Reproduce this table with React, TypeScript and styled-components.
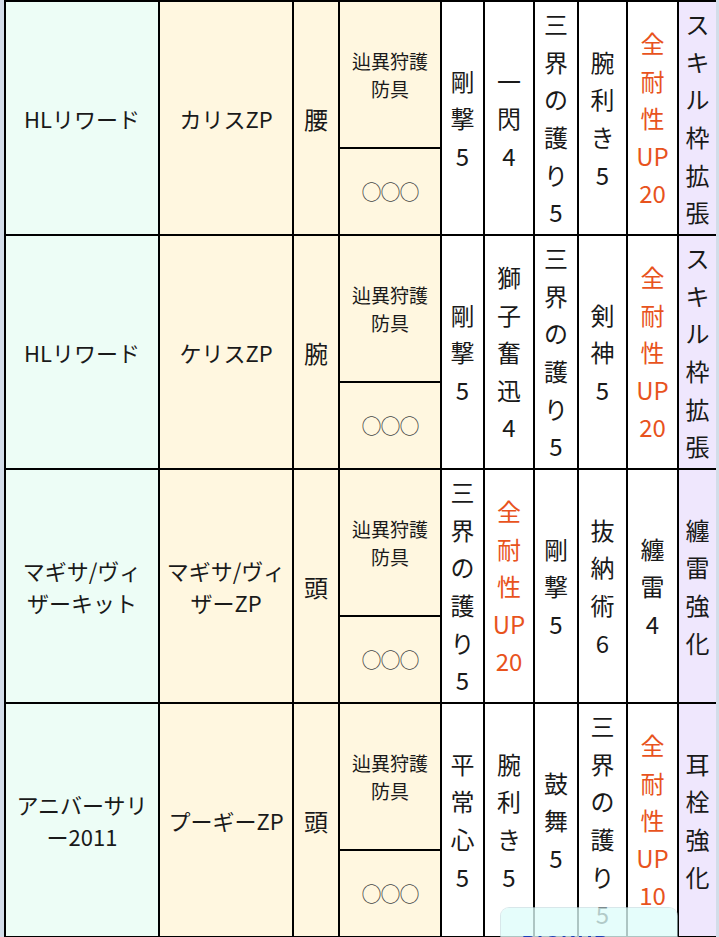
import styled, { createGlobalStyle } from 'styled-components'

const GlobalStyle = createGlobalStyle`
  html, body {
    margin: 0;
    padding: 0;
    background: #d3dde9;
    overflow: hidden;
  }
  body {
    font-family: "Noto Sans CJK JP", "Noto Sans", sans-serif;
    color: #1a1a1a;
  }
`

const colors = {
  mint: '#edfdf6',
  cream: '#fff7e0',
  white: '#ffffff',
  lavender: '#efe7fd',
  red: '#e8531d',
}

const Page = styled.div`
  padding-left: 4px;
  width: 719px;
  height: 937px;
  box-sizing: border-box;
  overflow: hidden;
`

const Table = styled.div`
  display: grid;
  grid-template-columns: 152px 132px 44px 100px 41px 48px 42px 47px 49px 37px;
  grid-auto-rows: 232px;
  gap: 2px;
  padding: 2px 0 2px 2px;
  background: #000;
  width: max-content;
`

const Cell = styled.div<{ $bg: string }>`
  background: ${(p) => p.$bg};
  display: flex;
  flex-direction: column;
  align-items: center;
  justify-content: center;
  text-align: center;
`

const NameCell = styled(Cell)`
  font-size: 22px;
  line-height: 32px;
  padding: 0 6px;
`

const PartCell = styled(Cell)`
  font-size: 24px;
`

const SlotGroup = styled.div`
  display: grid;
  grid-template-rows: 145px 1fr;
  gap: 2px;
  background: #000;
`

const SlotCell = styled(Cell)`
  font-size: 19px;
  line-height: 28px;
  padding: 0 8px;
`

const Holes = styled(Cell)`
  font-size: 20px;
  color: #444;
  letter-spacing: -1px;
`

const SkillCell = styled(Cell)<{ $red?: boolean }>`
  font-size: 24px;
  line-height: 37.6px;
  color: ${(p) => (p.$red ? colors.red : '#1a1a1a')};
`

const Line = styled.span`
  display: block;
  white-space: nowrap;
`

const Overlay = styled.div`
  position: fixed;
  left: 501px;
  top: 908px;
  width: 176px;
  height: 60px;
  border-radius: 8px;
  background: rgba(222, 252, 250, 0.78);
  box-shadow: 0 0 0 1px rgba(190, 215, 220, 0.6);
  overflow: hidden;
`

const OverlayText = styled.div`
  margin: 24px 0 0 21px;
  font-family: "Liberation Sans", sans-serif;
  font-weight: 700;
  font-size: 20px;
  letter-spacing: 2px;
  color: #1c3fb8;
`

type Row = {
  series: string[]
  armor: string[]
  part: string
  skills: string[]
  extra: string
}

const rows: Row[] = [
  {
    series: ['HLリワード'],
    armor: ['カリスZP'],
    part: '腰',
    skills: ['剛撃5', '一閃4', '三界の護り5', '腕利き5', '全耐性UP20'],
    extra: 'スキル枠拡張',
  },
  {
    series: ['HLリワード'],
    armor: ['ケリスZP'],
    part: '腕',
    skills: ['剛撃5', '獅子奮迅4', '三界の護り5', '剣神5', '全耐性UP20'],
    extra: 'スキル枠拡張',
  },
  {
    series: ['マギサ/ヴィ', 'ザーキット'],
    armor: ['マギサ/ヴィ', 'ザーZP'],
    part: '頭',
    skills: ['三界の護り5', '全耐性UP20', '剛撃5', '抜納術6', '纏雷4'],
    extra: '纏雷強化',
  },
  {
    series: ['アニバーサリ', 'ー2011'],
    armor: ['プーギーZP'],
    part: '頭',
    skills: ['平常心5', '腕利き5', '鼓舞5', '三界の護り5', '全耐性UP10'],
    extra: '耳栓強化',
  },
]

// one glyph per line, but keep latin words and numbers together
const tokens = (s: string) => s.match(/[A-Za-z]+|[0-9]+|./gu) ?? []

const Vertical = ({ text }: { text: string }) => (
  <>
    {tokens(text).map((t, i) => (
      <Line key={i}>{t}</Line>
    ))}
  </>
)

const App = () => {
  return (
    <Page>
      <GlobalStyle />
      <Table>
        {rows.map((r, i) => (
          <>
            <NameCell key={`s${i}`} $bg={colors.mint}>
              {r.series.map((l) => (
                <Line key={l}>{l}</Line>
              ))}
            </NameCell>
            <NameCell key={`a${i}`} $bg={colors.cream}>
              {r.armor.map((l) => (
                <Line key={l}>{l}</Line>
              ))}
            </NameCell>
            <PartCell key={`p${i}`} $bg={colors.cream}>
              {r.part}
            </PartCell>
            <SlotGroup key={`g${i}`}>
              <SlotCell $bg={colors.cream}>辿異狩護防具</SlotCell>
              <Holes $bg={colors.cream}>○○○</Holes>
            </SlotGroup>
            {r.skills.map((s, j) => (
              <SkillCell key={`k${i}-${j}`} $bg={colors.white} $red={s.startsWith('全耐性')}>
                <Vertical text={s} />
              </SkillCell>
            ))}
            <SkillCell key={`e${i}`} $bg={colors.lavender}>
              <Vertical text={r.extra} />
            </SkillCell>
          </>
        ))}
      </Table>
      <Overlay>
        <OverlayText>PICKUP</OverlayText>
      </Overlay>
    </Page>
  )
}

export default App
